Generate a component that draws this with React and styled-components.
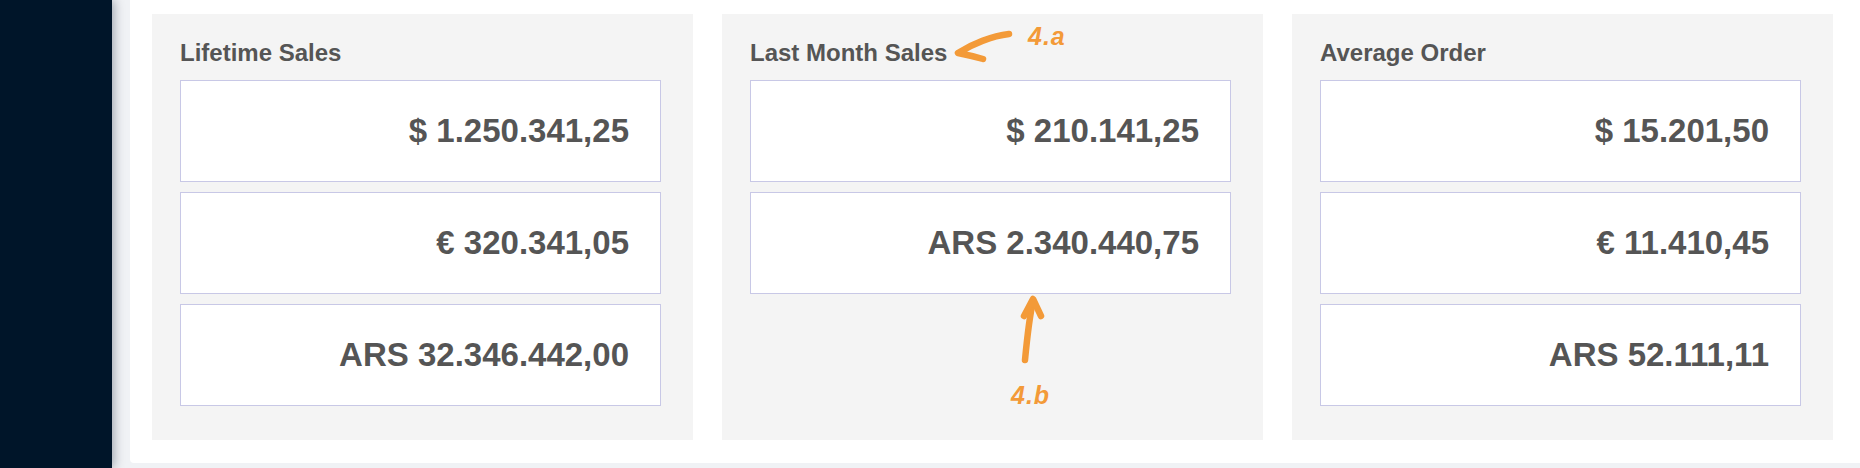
import styled, { createGlobalStyle } from "styled-components";

const GlobalStyle = createGlobalStyle`
  html, body {
    margin: 0;
    padding: 0;
    background: #f0f2f5;
    font-family: "Liberation Sans", Arial, Helvetica, sans-serif;
  }
`;

const Layout = styled.div`
  display: flex;
  width: 1860px;
  height: 468px;
  overflow: hidden;
`;

const Sidebar = styled.aside`
  width: 112px;
  flex-shrink: 0;
  background: #001529;
  box-shadow: 2px 0 10px rgba(0, 21, 41, 0.35);
  z-index: 1;
`;

const Main = styled.main`
  flex: 1;
  padding: 0 0 5px 18px;
  background: #f0f2f5;
`;

const Card = styled.section`
  height: 100%;
  box-sizing: border-box;
  background: #fff;
  border-radius: 0 0 0 4px;
  padding: 14px 27px 0 22px;
  display: grid;
  grid-template-columns: repeat(3, 541px);
  column-gap: 29px;
  align-items: start;
`;

const Panel = styled.div`
  position: relative;
  height: 426px;
  box-sizing: border-box;
  background: #f4f4f4;
  padding: 25px 32px 0 28px;
`;

const Title = styled.h3`
  margin: 0 0 13px;
  font-size: 24px;
  line-height: 28px;
  font-weight: 700;
  color: #555;
`;

const Values = styled.div`
  display: flex;
  flex-direction: column;
  gap: 10px;
`;

const ValueBox = styled.div`
  height: 102px;
  box-sizing: border-box;
  background: #fff;
  border: 1.5px solid #c8c8e6;
  display: flex;
  align-items: center;
  justify-content: flex-end;
  padding-right: 31px;
  font-size: 33px;
  font-weight: 700;
  color: #555;
`;

const Note = styled.span`
  position: absolute;
  left: ${(p) => p.$left}px;
  top: ${(p) => p.$top}px;
  font-size: 25px;
  line-height: 25px;
  font-weight: 700;
  font-style: italic;
  letter-spacing: 1px;
  color: #f39a38;
`;

const Arrows = styled.svg`
  position: absolute;
  inset: 0;
  width: 100%;
  height: 100%;
  pointer-events: none;
  overflow: visible;
`;

const panels = [
  { title: "Lifetime Sales", values: ["$ 1.250.341,25", "€ 320.341,05", "ARS 32.346.442,00"] },
  { title: "Last Month Sales", values: ["$ 210.141,25", "ARS 2.340.440,75"], notes: true },
  { title: "Average Order", values: ["$ 15.201,50", "€ 11.410,45", "ARS 52.111,11"] },
];

const App = () => (
  <>
    <GlobalStyle />
    <Layout>
      <Sidebar />
      <Main>
        <Card>
          {panels.map((panel) => (
            <Panel key={panel.title}>
              <Title>{panel.title}</Title>
              <Values>
                {panel.values.map((v) => (
                  <ValueBox key={v}>{v}</ValueBox>
                ))}
              </Values>
              {panel.notes && (
                <>
                  <Arrows viewBox="0 0 541 426">
                    <g fill="none" stroke="#f39a38" strokeWidth="6.5" strokeLinecap="round" strokeLinejoin="round">
                      <path d="M287 20 C270 22 250 30 236 39 C246 41 254 43 261 45" />
                      <path d="M303 346 C305 325 307 305 311 287" />
                      <path d="M302 302 L311 285 L319 302" />
                    </g>
                  </Arrows>
                  <Note $left={306} $top={10}>4.a</Note>
                  <Note $left={289} $top={369}>4.b</Note>
                </>
              )}
            </Panel>
          ))}
        </Card>
      </Main>
    </Layout>
  </>
);

export default App;
